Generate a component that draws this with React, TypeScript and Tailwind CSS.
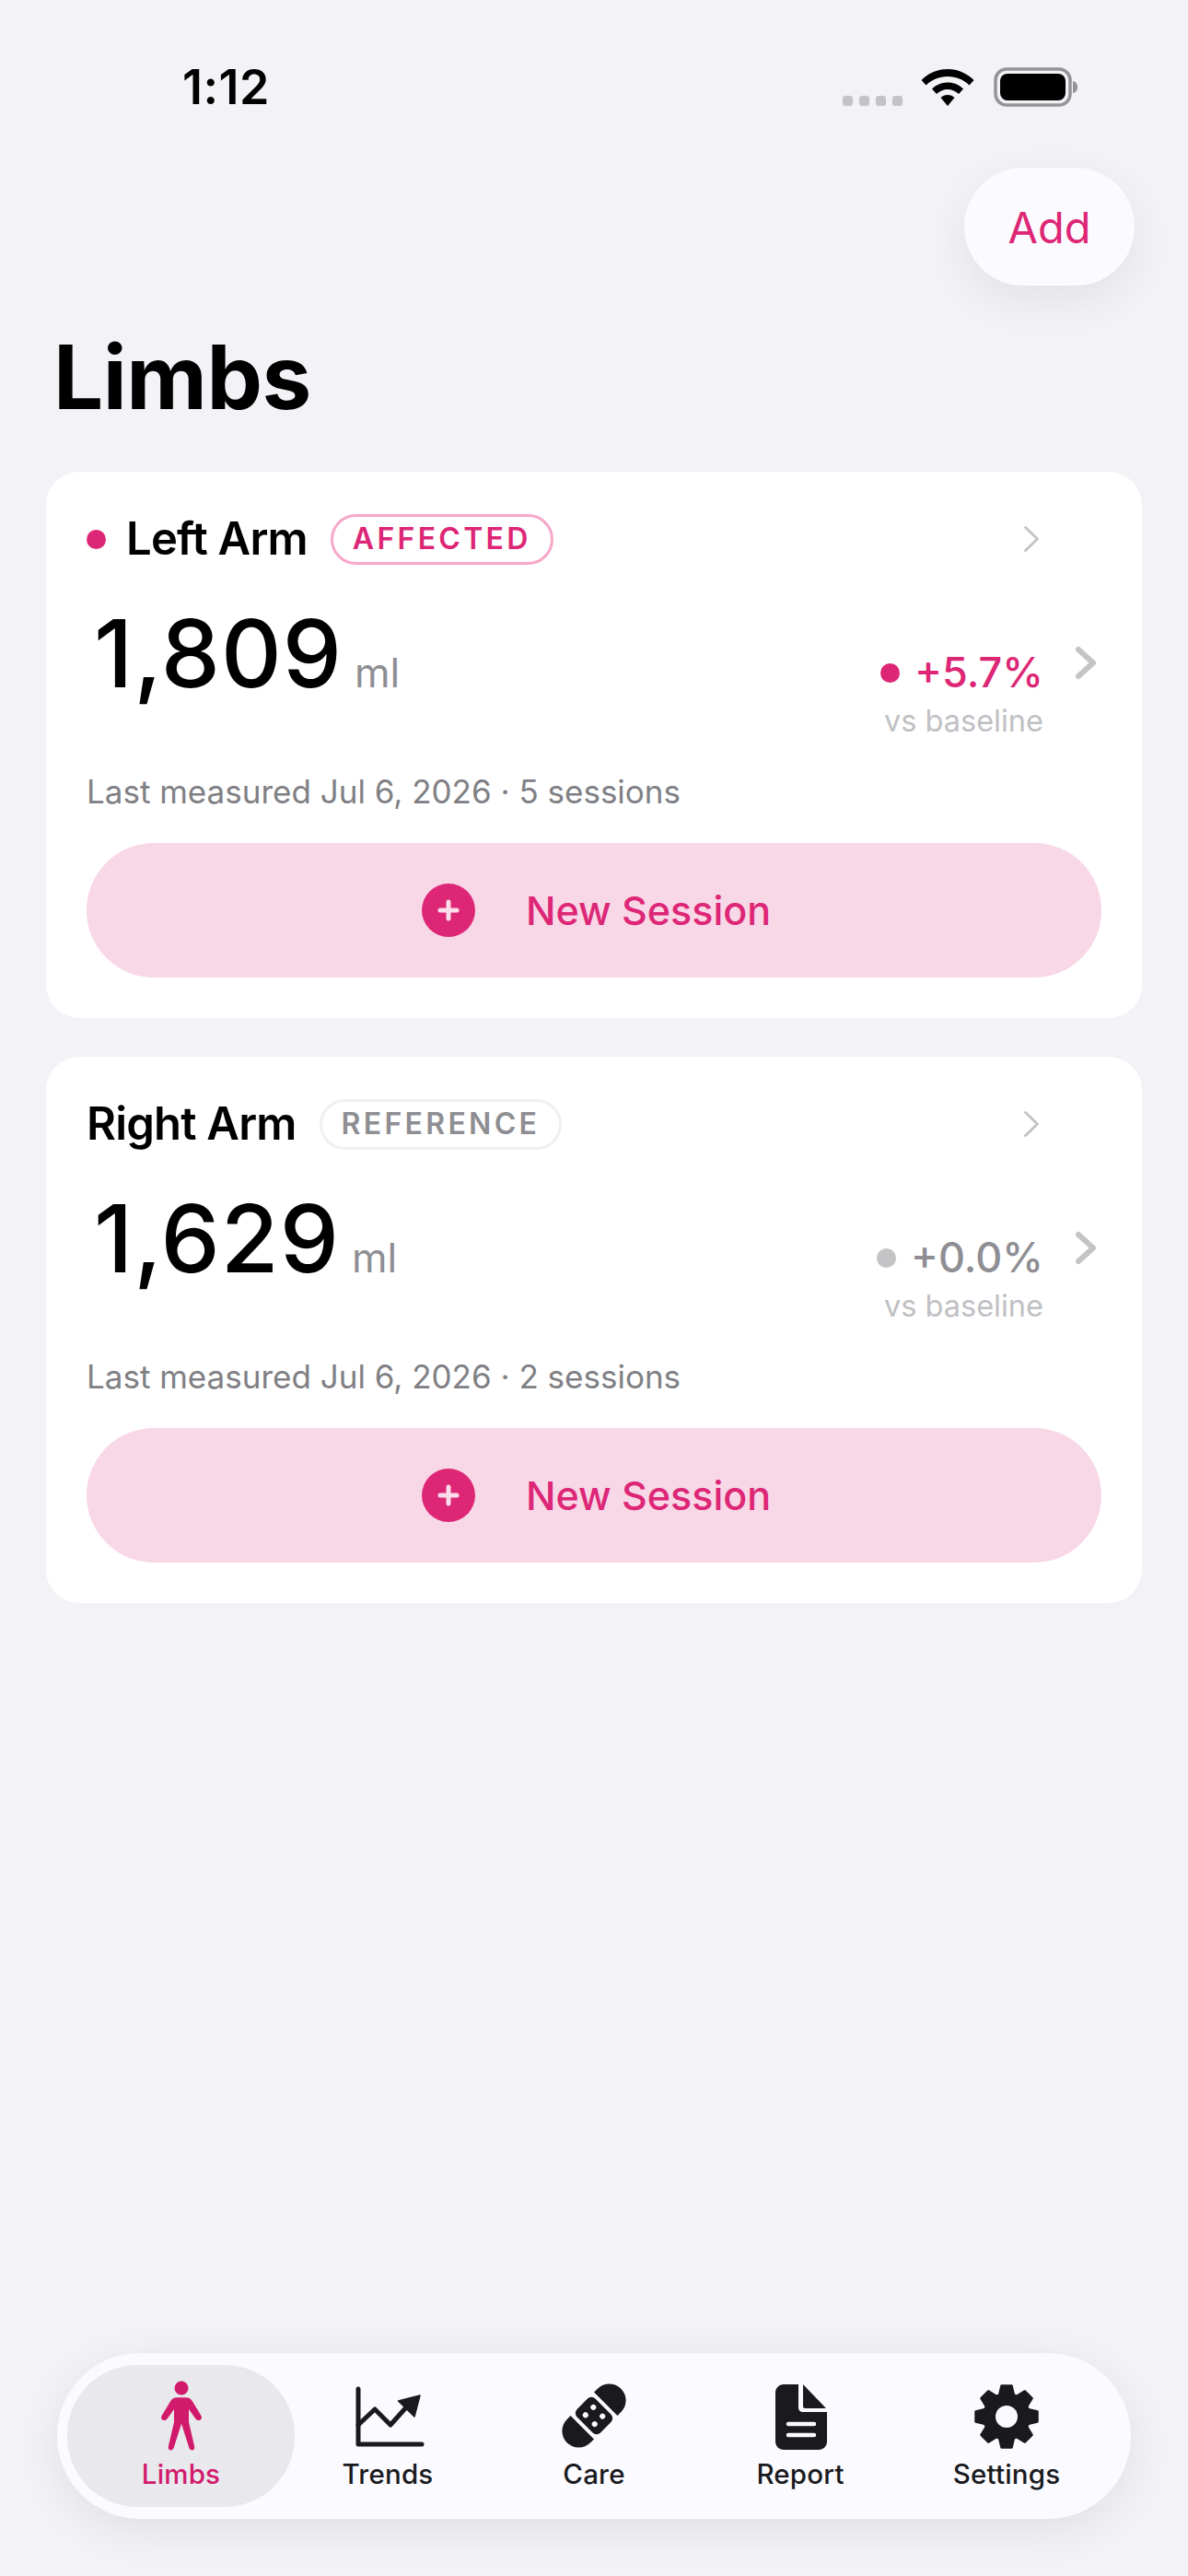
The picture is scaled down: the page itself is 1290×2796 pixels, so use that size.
import React from "react";

function Chevron({ className, w, h, sw }: { className?: string; w: number; h: number; sw: number }) {
  return (
    <svg width={w} height={h} viewBox={`0 0 ${w} ${h}`} className={className} fill="none">
      <path d={`M${sw / 2 + 1} ${sw / 2 + 1} L${w - sw / 2 - 1} ${h / 2} L${sw / 2 + 1} ${h - sw / 2 - 1}`} stroke="#c4c4c7" strokeWidth={sw} strokeLinecap="round" strokeLinejoin="round" />
    </svg>
  );
}

function Plus() {
  return (
    <svg width="58" height="58" viewBox="0 0 58 58">
      <circle cx="29" cy="29" r="29" fill="#dd2776" />
      <path d="M29 20v18M20 29h18" stroke="#fbdcea" strokeWidth="5" strokeLinecap="round" />
    </svg>
  );
}

function Card({ name, dot, badge, badgeClass, value, delta, deltaClass, deltaDot, meta }: {
  name: string; dot: boolean; badge: string; badgeClass: string; value: string; delta: string; deltaClass: string; deltaDot: string; meta: string;
}) {
  return (
    <section className="mx-[50px] h-[593px] rounded-[36px] bg-white pl-[44px] pr-[44px] pt-[45px]">
      <div className="flex h-[56px] items-center pr-[67px]">
        {dot && <span className="mr-[22px] h-[21px] w-[21px] rounded-full bg-[#dd2776]" />}
        <span className="text-[49px] leading-[58px] font-semibold tracking-[-0.8px] text-black">{name}</span>
        <span className={`ml-[25px] flex h-[55px] items-center rounded-full border-[3px] px-[21px] text-[32px] leading-none font-semibold tracking-[3.3px] ${badgeClass}`}>{badge}</span>
        <Chevron className="ml-auto" w={18} h={30} sw={3} />
      </div>
      <div className="mt-[36px] flex h-[176px] items-start pr-[5px]">
        <div className="flex items-baseline pl-[8px]">
          <span className="text-[102px] leading-[120px] font-medium tracking-[1px] text-black">{value}</span>
          <span className="ml-[13px] text-[44px] leading-none text-[#8e8e93]">ml</span>
        </div>
        <div className="ml-auto mt-[56px] flex flex-col items-end">
          <div className="flex items-center">
            <span className={`mr-[16px] h-[21px] w-[21px] rounded-full ${deltaDot}`} />
            <span className={`text-[45px] leading-[50px] font-medium ${deltaClass}`}>{delta}</span>
          </div>
          <span className="mt-[8px] text-[32.5px] leading-[40px] text-[#c0c0c4]">vs baseline</span>
        </div>
        <Chevron className="ml-[34px] mt-[52px]" w={24} h={37} sw={6} />
      </div>
      <p className="mt-[12px] h-[44px] text-[35px] leading-[44px] text-[#808084]">{meta}</p>
      <button className="mt-[34px] flex h-[146px] w-full items-center justify-center rounded-[74px] bg-[#f8d7e7] pl-[5px]">
        <Plus />
        <span className="ml-[55px] text-[43px] font-medium text-[#dd2776]">New Session</span>
      </button>
    </section>
  );
}

function PersonIcon() {
  return (
    <svg width="80" height="80" viewBox="0 0 80 80" className="-mt-[1px]">
      <circle cx="40" cy="11" r="7.500" fill="#d21a6c" />
      <path d="M35 21.300H45C48 21.300 50.500 22.800 52 25.500L61.700 41.500C63 46 58 47.500 55.500 44.500L48 34V48L54.200 74.500C55 79.500 49 80 48 74.700L40 49.700 32 74.700C31 80 25 79.500 25.800 74.500L32 48V34L24.500 44.500C22 47.500 17 46 18.300 41.500L28 25.500C29.500 22.800 32 21.300 35 21.300Z" fill="#d21a6c" />
    </svg>
  );
}

function TrendIcon() {
  return (
    <svg width="80" height="80" viewBox="0 0 80 80" fill="none">
      <path d="M8 11v60h69" stroke="#1a1a1e" strokeWidth="5" strokeLinecap="round" strokeLinejoin="round" />
      <path d="M8 50 26 33 43 50 60 31" stroke="#1a1a1e" strokeWidth="5" strokeLinecap="round" strokeLinejoin="round" />
      <path d="M51.500 24 75 18 69 41Z" fill="#1a1a1e" stroke="#1a1a1e" strokeWidth="1.500" strokeLinejoin="round" />
    </svg>
  );
}

function BandageIcon() {
  return (
    <svg width="80" height="80" viewBox="0 0 80 80">
      <g transform="rotate(-45 40 40)">
        <path d="M22 22H16.500a18 18 0 0 0 0 36H22Z" fill="#1a1a1e" />
        <path d="M58 22h5.500a18 18 0 0 1 0 36H58Z" fill="#1a1a1e" />
        <rect x="26" y="22" width="28" height="36" rx="6" fill="#1a1a1e" />
        <circle cx="34" cy="33" r="3" fill="#fbfbff" />
        <circle cx="46" cy="33" r="3" fill="#fbfbff" />
        <circle cx="34" cy="47" r="3" fill="#fbfbff" />
        <circle cx="46" cy="47" r="3" fill="#fbfbff" />
      </g>
    </svg>
  );
}

function DocIcon() {
  return (
    <svg width="80" height="80" viewBox="0 0 80 80">
      <path d="M22 6H38V31c0 3 2 5 5 5H69V68c0 5-4 9-9 9H22c-5 0-9-4-9-9V15c0-5 4-9 9-9Z" fill="#1a1a1e" />
      <path d="M43 6 68 32H45c-1 0-2-1-2-2Z" fill="#1a1a1e" />
      <path d="M27 49h28M27 61h28" stroke="#fbfbff" strokeWidth="4.500" strokeLinecap="round" />
    </svg>
  );
}

function GearIcon() {
  const teeth = [0, 45, 90, 135, 180, 225, 270, 315];
  return (
    <svg width="80" height="80" viewBox="0 0 80 80">
      <circle cx="40" cy="41" r="26" fill="#1a1a1e" />
      {teeth.map((a) => (
        <path key={a} d="M32 18 34.500 7.500H45.500L48 18Z" fill="#1a1a1e" stroke="#1a1a1e" strokeWidth="2.500" strokeLinejoin="round" transform={`rotate(${a} 40 41)`} />
      ))}
      <circle cx="40" cy="41" r="12" fill="#fbfbff" />
    </svg>
  );
}

function NavItem({ label, active, icon }: { label: string; active?: boolean; icon: React.ReactNode }) {
  return (
    <div className={active ? "flex w-[247px] -mx-[11px] flex-col items-center rounded-[76px] bg-[#e8e8ed] pt-[15px]" : "flex w-[224px] flex-col items-center pt-[15px]"}>
      <div className="h-[80px]">{icon}</div>
      <span className={`mt-[5px] text-[29.5px] leading-[36px] font-medium tracking-[0.2px] ${active ? "text-[#d21a6c]" : "text-[#1a1a1e]"}`}>{label}</span>
    </div>
  );
}

export default function App() {
  return (
    <div className="flex h-[2796px] w-[1290px] flex-col overflow-hidden bg-[#f2f2f7] [font-family:Inter,'Liberation_Sans',sans-serif]">
      <header className="flex h-[182px] items-start justify-between pl-[198px] pr-[119px] pt-[62px]">
        <span className="text-[52px] leading-[66px] font-semibold tracking-[0.5px] text-black">1:12</span>
        <div className="mt-[11px] flex items-end gap-[20px]">
          <svg width="65" height="11" viewBox="0 0 65 11" className="mb-[1px]" fill="#c3c3c8">
            <rect x="0" width="11" height="11" rx="3" />
            <rect x="18" width="11" height="11" rx="3" />
            <rect x="36" width="11" height="11" rx="3" />
            <rect x="54" width="11" height="11" rx="3" />
          </svg>
          <svg width="58" height="41" viewBox="0 0 58 41" fill="#000">
            <path d="M29 0C40 0 50 4.500 57.500 12L52.500 17.500C46.500 11.500 38 8 29 8S11.500 11.500 5.500 17.500L.5 12C8 4.500 18 0 29 0Z" />
            <path d="M29 14.500c6.500 0 12.500 2.500 17 7L41 27c-3-3-7.500-5-12-5s-9 2-12 5l-5-5.500c4.500-4.500 10.500-7 17-7Z" />
            <path d="M29 28c3 0 5.500 1 7.500 3L29 40 21.500 31c2-2 4.500-3 7.500-3Z" />
          </svg>
          <svg width="92" height="43" viewBox="0 0 92 43" className="ml-[1px]">
            <rect x="2" y="2" width="81" height="39" rx="12" fill="none" stroke="#949498" strokeWidth="3.500" />
            <rect x="7" y="7" width="71" height="29" rx="8" fill="#000" />
            <path d="M86 15c3 .5 5 3 5 6.500S89 27.500 86 28Z" fill="#949498" />
          </svg>
        </div>
      </header>

      <div className="flex justify-end pr-[58px]">
        <button className="h-[128px] w-[185px] rounded-[64px] bg-[#fbfbff] text-[47px] leading-none text-[#dd2776] shadow-[0_16px_50px_rgba(0,0,0,0.07)]">Add</button>
      </div>

      <h1 className="ml-[58px] mt-[42px] h-[160px] text-[96px] leading-[114px] font-bold tracking-[-0.5px] text-black">Limbs</h1>

      <Card name="Left Arm" dot badge="AFFECTED" badgeClass="border-[#f6a8c9] text-[#dd2776]" value="1,809" delta="+5.7%" deltaClass="text-[#dd2776]" deltaDot="bg-[#dd2776]" meta="Last measured Jul 6, 2026 · 5 sessions" />
      <div className="h-[42px]" />
      <Card name="Right Arm" dot={false} badge="REFERENCE" badgeClass="border-[#f0f0f2] text-[#8e8e93]" value="1,629" delta="+0.0%" deltaClass="text-[#8e8e93]" deltaDot="bg-[#c4c4c7]" meta="Last measured Jul 6, 2026 · 2 sessions" />

      <nav className="mx-[62px] mb-[62px] mt-auto flex h-[180px] rounded-[90px] bg-[#fbfbff] py-[13px] px-[22px] shadow-[0_12px_50px_rgba(0,0,0,0.08)]">
        <NavItem label="Limbs" active icon={<PersonIcon />} />
        <NavItem label="Trends" icon={<TrendIcon />} />
        <NavItem label="Care" icon={<BandageIcon />} />
        <NavItem label="Report" icon={<DocIcon />} />
        <NavItem label="Settings" icon={<GearIcon />} />
      </nav>
    </div>
  );
}
